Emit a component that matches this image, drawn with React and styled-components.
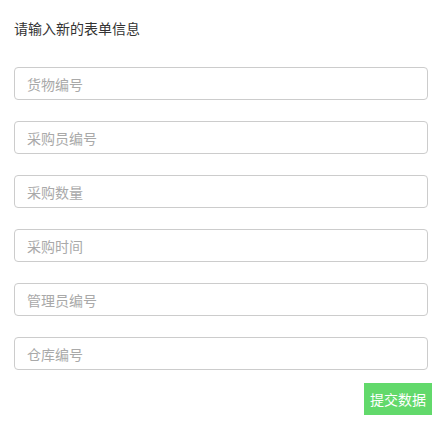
import React, { useState } from "react";
import styled, { createGlobalStyle } from "styled-components";

const GlobalStyle = createGlobalStyle`
  body {
    margin: 0;
    background: #fff;
    font-family: "Microsoft YaHei", "Noto Sans CJK SC", "Noto Sans", sans-serif;
  }
`;

const Container = styled.div`
  width: 445px;
  padding: 18px 0 0 14px;
  box-sizing: border-box;
`;

const Title = styled.div`
  font-size: 14px;
  line-height: 20px;
  color: #333;
  margin-bottom: 29px;
`;

const Form = styled.form`
  display: flex;
  flex-direction: column;
  gap: 21px;
`;

const Input = styled.input`
  width: 414px;
  height: 33px;
  box-sizing: border-box;
  border: 1px solid #ccc;
  border-radius: 4px;
  padding: 0 12px;
  font-size: 14px;
  font-family: inherit;
  color: #555;
  outline: none;

  &::placeholder {
    color: #a9a9a9;
  }
`;

const Footer = styled.div`
  display: flex;
  justify-content: flex-end;
  width: 418px;
  margin-top: -8px;
`;

const Button = styled.button`
  width: 68px;
  height: 32px;
  border: none;
  padding: 0;
  background-color: #62d96b;
  color: #fff;
  font-size: 14px;
  font-family: inherit;
  cursor: pointer;
`;

const fields = [
  "货物编号",
  "采购员编号",
  "采购数量",
  "采购时间",
  "管理员编号",
  "仓库编号",
];

const App = () => {
  const [values, setValues] = useState({});

  const handleSubmit = (event) => {
    event.preventDefault();
  };

  return (
    <Container>
      <GlobalStyle />
      <Title>请输入新的表单信息</Title>
      <Form onSubmit={handleSubmit}>
        {fields.map((name) => (
          <Input
            key={name}
            placeholder={name}
            value={values[name] || ""}
            onChange={(event) =>
              setValues({ ...values, [name]: event.target.value })
            }
          />
        ))}
        <Footer>
          <Button type="submit">提交数据</Button>
        </Footer>
      </Form>
    </Container>
  );
};

export default App;
